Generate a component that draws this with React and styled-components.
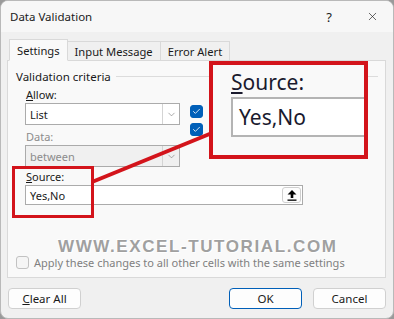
import React from 'react';
import styled, { createGlobalStyle } from 'styled-components';
import { ChevronDown, Check, X } from 'lucide-react';

const Global = createGlobalStyle`
  html, body { margin: 0; padding: 0; }
  body {
    background: #9a9a9a;
    font-family: "Noto Sans", "Open Sans", sans-serif;
    font-size: 11px;
    color: #1a1a1a;
  }
`;

function App() {
  return (
    <>
      <Global />
      <Dialog>
        <TitleBar>
          <Title>Data Validation</Title>
          <TitleButtons>
            <Help>?</Help>
            <X size={13} strokeWidth={1.2} />
          </TitleButtons>
        </TitleBar>

        <Tabs>
          <Tab active>Settings</Tab>
          <Tab>Input Message</Tab>
          <Tab>Error Alert</Tab>
        </Tabs>

        <Panel>
          <GroupHeader>
            <span>Validation criteria</span>
            <Rule />
          </GroupHeader>

          <Fields>
            <Label><u>A</u>llow:</Label>
            <SelectRow>
              <Select>
                <SelectText>List</SelectText>
                <Drop><ChevronDown size={11} strokeWidth={1.2} /></Drop>
              </Select>
              <CheckCol>
                <Box checked><Check size={9} strokeWidth={2.2} color="#fff" /></Box>
                <Box checked><Check size={9} strokeWidth={2.2} color="#fff" /></Box>
              </CheckCol>
            </SelectRow>

            <Label disabled gap={4}>Data:</Label>
            <SelectRow>
              <Select disabled>
                <SelectText disabled>between</SelectText>
                <Drop><ChevronDown size={11} strokeWidth={1.2} /></Drop>
              </Select>
            </SelectRow>

            <Label gap={2}><u>S</u>ource:</Label>
            <Input>
              <InputText>Yes,No</InputText>
              <Upload>
                <svg width="10" height="12" viewBox="0 0 10 12">
                  <path d="M5 1 L9.5 5.5 L6.3 5.5 L6.3 9 L3.7 9 L3.7 5.5 L0.5 5.5 Z" fill="#000" />
                  <rect x="0.5" y="10.5" width="9" height="1.3" fill="#000" />
                </svg>
              </Upload>
            </Input>
          </Fields>

          <ApplyRow>
            <Box />
            <span>Apply these changes to all other cells with the same settings</span>
          </ApplyRow>
        </Panel>

        <Footer>
          <Button><u>C</u>lear All</Button>
          <Spacer />
          <Button primary>OK</Button>
          <Button>Cancel</Button>
        </Footer>

        <Watermark>WWW.EXCEL-TUTORIAL.COM</Watermark>

        <Connector width="394" height="319" viewBox="0 0 394 319">
          <line x1="92" y1="182" x2="212" y2="133" stroke="#d3141b" strokeWidth="4" />
        </Connector>
        <SmallMark />
        <Callout>
          <CalloutLabel><u>S</u>ource:</CalloutLabel>
          <CalloutInput>Yes,No</CalloutInput>
        </Callout>
      </Dialog>
    </>
  );
}

export default App;

const Dialog = styled.div`
  position: relative;
  width: 392px;
  height: 317px;
  border: 1px solid #b9b9b9;
  border-radius: 8px;
  background: #f0f0f0;
  display: flex;
  flex-direction: column;
  overflow: hidden;
`;

const TitleBar = styled.div`
  height: 31px;
  flex-shrink: 0;
  display: flex;
  align-items: center;
  justify-content: space-between;
  padding: 0 14px 0 9px;
  background: #f7f7f7;
`;

const Title = styled.div`
  font-size: 11.5px;
`;

const TitleButtons = styled.div`
  display: flex;
  align-items: center;
  gap: 34px;
  color: #1a1a1a;
`;

const Help = styled.span`
  font-size: 13px;
`;

const Tabs = styled.div`
  display: flex;
  align-items: flex-end;
  margin: 6px 0 0 8px;
  height: 22px;
  position: relative;
  z-index: 1;
`;

const Tab = styled.div`
  height: ${p => (p.active ? '22px' : '19px')};
  box-sizing: border-box;
  padding: 0 ${p => (p.active ? '7px' : '7px')};
  display: flex;
  align-items: center;
  font-size: 11.2px;
  border: 1px solid #d9d9d9;
  border-bottom: ${p => (p.active ? '1px solid #f9f9f9' : 'none')};
  border-left: ${p => (p.active ? '1px solid #d9d9d9' : 'none')};
  background: ${p => (p.active ? '#f9f9f9' : '#f0f0f0')};
  margin-bottom: ${p => (p.active ? '-1px' : '0')};
  &:first-child { border-left: 1px solid #d9d9d9; }
`;

const Panel = styled.div`
  margin: 0 7px 0 6px;
  height: 218px;
  box-sizing: border-box;
  border: 1px solid #d9d9d9;
  background: #f9f9f9;
  display: flex;
  flex-direction: column;
  padding: 7px 7px 8px 8px;
`;

const GroupHeader = styled.div`
  display: flex;
  align-items: center;
  gap: 5px;
  height: 16px;
  font-size: 11.5px;
`;

const Rule = styled.div`
  flex: 1;
  height: 1px;
  background: #dcdcdc;
`;

const Fields = styled.div`
  display: flex;
  flex-direction: column;
  padding-left: 9px;
  margin-top: 3px;
`;

const Label = styled.div`
  height: 15px;
  line-height: 15px;
  margin-top: ${p => p.gap || 0}px;
  margin-bottom: 1px;
  padding-left: 1px;
  color: ${p => (p.disabled ? '#8c8c8c' : '#1a1a1a')};
`;

const SelectRow = styled.div`
  display: flex;
  align-items: flex-start;
  height: 22px;
  gap: 10px;
`;

const Select = styled.div`
  width: 155px;
  height: 22px;
  box-sizing: border-box;
  border: 1px solid #ababab;
  background: ${p => (p.disabled ? '#f0f0f0' : '#fff')};
  display: flex;
  align-items: center;
`;

const SelectText = styled.div`
  flex: 1;
  padding-left: 4px;
  color: ${p => (p.disabled ? '#8c8c8c' : '#1a1a1a')};
`;

const Drop = styled.div`
  width: 16px;
  height: 20px;
  border-left: 1px solid #d4d4d4;
  display: flex;
  align-items: center;
  justify-content: center;
  color: #666;
`;

const CheckCol = styled.div`
  display: flex;
  flex-direction: column;
  gap: 5px;
  margin-top: 2px;
`;

const Box = styled.div`
  width: 13px;
  height: 13px;
  box-sizing: border-box;
  border-radius: 3px;
  flex-shrink: 0;
  display: flex;
  align-items: center;
  justify-content: center;
  background: ${p => (p.checked ? '#005fb8' : '#f5f5f5')};
  border: 1px solid ${p => (p.checked ? '#005fb8' : '#c2c2c2')};
`;

const Input = styled.div`
  width: 278px;
  height: 20px;
  box-sizing: border-box;
  border: 1px solid #ababab;
  background: #fff;
  display: flex;
  align-items: center;
  justify-content: space-between;
  padding-right: 1px;
`;

const InputText = styled.div`
  padding-left: 4px;
`;

const Upload = styled.div`
  width: 19px;
  height: 16px;
  box-sizing: border-box;
  border: 1px solid #cfcfcf;
  border-radius: 3px;
  background: #fdfdfd;
  display: flex;
  align-items: center;
  justify-content: center;
`;

const ApplyRow = styled.div`
  margin-top: auto;
  display: flex;
  align-items: center;
  gap: 5px;
  height: 14px;
  color: #808080;
  white-space: nowrap;
`;

const Footer = styled.div`
  display: flex;
  align-items: center;
  gap: 11px;
  padding: 10px 7px 0 7px;
`;

const Spacer = styled.div`
  flex: 1;
`;

const Button = styled.div`
  width: 73px;
  height: 21px;
  box-sizing: border-box;
  border-radius: 4px;
  background: #fdfdfd;
  border: 1px solid ${p => (p.primary ? '#005fb8' : '#d0d0d0')};
  display: flex;
  align-items: center;
  justify-content: center;
  font-size: 11.5px;
`;

const Watermark = styled.div`
  position: absolute;
  left: 57px;
  top: 236px;
  font-family: "Liberation Sans", Arial, sans-serif;
  font-weight: bold;
  font-size: 17px;
  letter-spacing: 1.6px;
  color: #a0a0a0;
  text-shadow: -1px -1px 0 #fff, 1px 1px 1px #fff;
  white-space: nowrap;
  pointer-events: none;
`;

const Connector = styled.svg`
  position: absolute;
  left: -1px;
  top: -1px;
  pointer-events: none;
`;

const SmallMark = styled.div`
  position: absolute;
  left: 11px;
  top: 165px;
  width: 82px;
  height: 52px;
  box-sizing: border-box;
  border: 3px solid #d3141b;
`;

const Callout = styled.div`
  position: absolute;
  left: 208px;
  top: 60px;
  width: 159px;
  height: 98px;
  box-sizing: border-box;
  border: 4px solid #d3141b;
  background: #f9f9f9;
  overflow: hidden;
  padding: 3px 0 0 18px;
`;

const CalloutLabel = styled.div`
  font-size: 21px;
  line-height: 28px;
  color: #1a1a2e;
`;

const CalloutInput = styled.div`
  margin-top: 1px;
  width: 160px;
  height: 40px;
  box-sizing: border-box;
  border: 2px solid #b4b4b4;
  background: #fff;
  font-size: 21px;
  line-height: 36px;
  padding-left: 6px;
  color: #1a1a2e;
`;
